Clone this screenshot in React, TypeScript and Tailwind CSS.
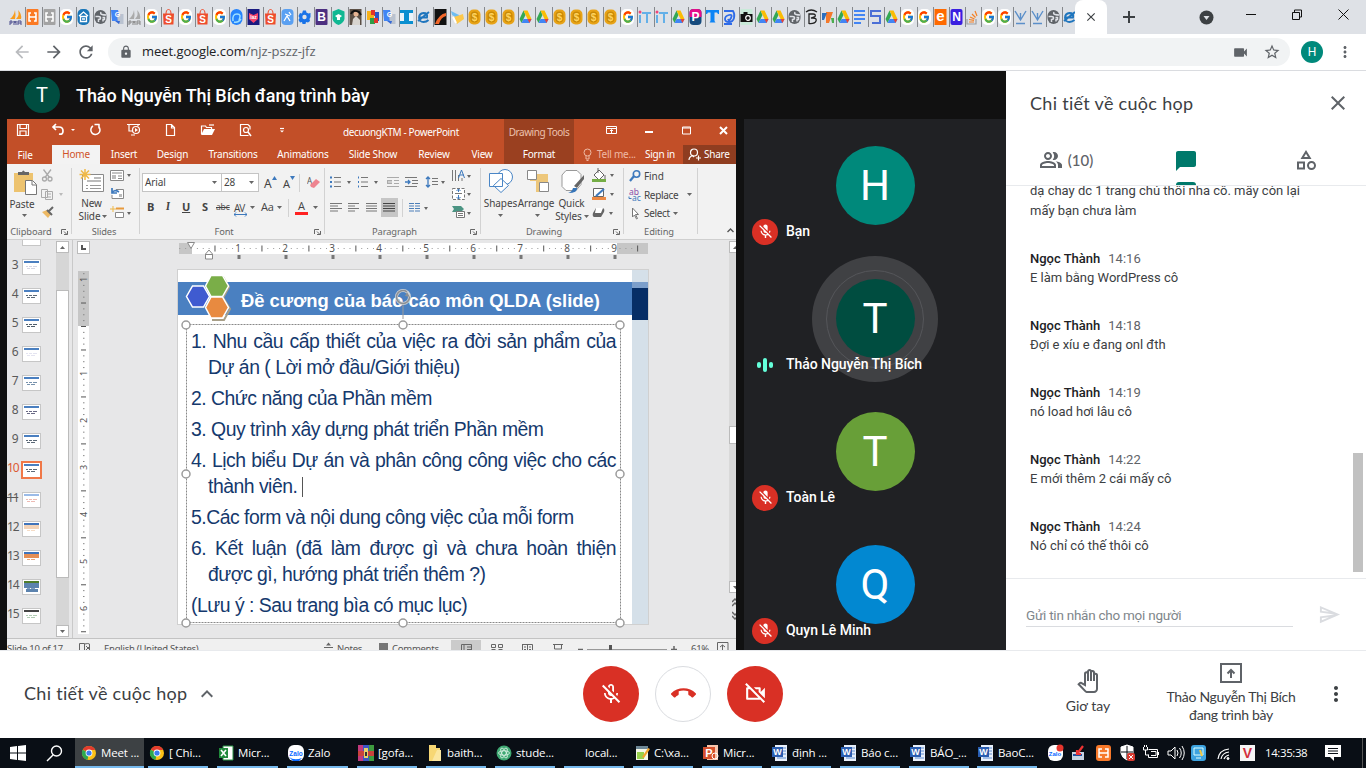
import React from 'react';
import {
  MdMicOff, MdOutlineMicOff, MdCallEnd, MdOutlineVideocamOff, MdOutlinePeopleAlt, MdChatBubble,
  MdOutlineCategory, MdClose, MdKeyboardArrowUp, MdMoreVert, MdArrowBack, MdArrowForward, MdRefresh,
  MdLock, MdVideocam, MdStarBorder, MdOutlineSend, MdOutlinePanTool,
} from 'react-icons/md';
import { FcGoogle } from 'react-icons/fc';

/* ---------- browser tabs ---------- */

const tabs: string[] = [
  'pma', 'xampp', 'xamppg', 'g', 'house', 'globe', 'tr', 'pmag', 'g', 'shopee', 'g', 'shopee', 'g', 'aqua', 'laz',
  'shopee', 'people', 'gear', 'boot', 'shield', 'photo', 'colors', 'tr', 'ibeam', 'e', 'swoosh', 'pencil', 'coin',
  'coin', 'coin', 'drive', 'drive', 'coin', 'coin', 'coin', 'coin', 'g', 'it', 'it', 'drive', 'p', 't', 'spiral',
];
const narrowTabs: string[] = [
  'camera', 'drive', 'drive', 'globe', 'beta', 'seven', 'drive', 'docs', 'lines', 'drive', 'g', 'g', 'ebay', 'n',
  'stack', 'g', 'g', 'v', 'v', 'globe',
];

const Letter = ({ c, fill = '#fff', size = 12, y = 12.3 }: { c: string; fill?: string; size?: number; y?: number }) => (
  <text x="6.5" y={y} fontSize={size} fontWeight="700" fontFamily="Liberation Sans, sans-serif" textAnchor="middle" fill={fill}>{c}</text>
);

const Xampp = ({ c }: { c: string }) => (
  <><rect x=".5" width="12" height="16" rx="1" fill={c} /><path d="M5 4H3v2.500q0 1.500 1.500 1.500H3v4h2M8 4h2v2.500Q10 8 8.500 8H10v4H8M4.500 8h4" stroke="#fff" strokeWidth="1.600" fill="none" /></>
);

function Fav({ k }: { k: string }) {
  if (k === 'g')
    return (
      <span className="flex h-[16px] w-[13px] items-center justify-center rounded-[5px] bg-white">
        <FcGoogle size={14} preserveAspectRatio="none" className="w-[12px]" />
      </span>
    );
  const body: Record<string, React.ReactNode> = {
    pma: <><path d="M1 10Q5 7 6 1Q7 6 6 10ZM7 10Q11 6 9 1Q13 5 12 10Z" fill="#f89c1c" /><path d="M1 12v4m0-4h2v2H1m4 2v-4l1 2 1-2v4m2 0v-4h3v4m-3-2h3" stroke="#4c4f8f" fill="none" /></>,
    pmag: <><path d="M1 10Q5 7 6 1Q7 6 6 10ZM7 10Q11 6 9 1Q13 5 12 10Z" fill="#aaa" /><path d="M1 12v4m0-4h2v2H1m4 2v-4l1 2 1-2v4m2 0v-4h3v4m-3-2h3" stroke="#888" fill="none" /></>,
    xampp: <Xampp c="#fb7a24" />,
    xamppg: <Xampp c="#a3a3a3" />,
    house: <><rect x=".5" width="12" height="16" rx="5" fill="#1976b8" /><path d="M2 7l4.500-4L11 7M3.500 7.500h6v5h-6zM5 10h3" stroke="#fff" strokeWidth="1.300" fill="none" /></>,
    globe: <><rect x=".5" y="1" width="12" height="14" rx="6" fill="#5f6368" /><path d="M7 3q-1 2 1 2.500T12 6M1.500 7.500h3q2 0 2 1.500t-2 1.500V13M8.500 8.500h2v2H9v2" stroke="#dee1e6" strokeWidth="1.500" fill="none" /></>,
    tr: <><path d="M0 1h7l3 11H1z" fill="#4285f4" /><path d="M6 5h6.500v10H7z" fill="#b9c2d0" /><path d="M4 12h5l-1 3z" fill="#3367d6" /><Letter c="G" size={7} y={8} /></>,
    shopee: <><path d="M1 4.500h11l-.6 11H1.600z" fill="#ee4d2d" /><path d="M4 5q0-4.500 2.500-4.500T9 5" stroke="#ee4d2d" fill="none" /><Letter c="S" size={10} y={13.5} /></>,
    aqua: <><rect x=".5" width="12" height="16" rx="6" fill="#2684fc" /><path d="M3 12q-1-7 4-7t2 6M4 13q4 1 7-3" stroke="#9fe0ff" strokeWidth="1.500" fill="none" /></>,
    laz: <><rect x=".5" width="12" height="16" fill="#1a1a80" /><path d="M2 4l4.500 2L11 4v6l-4.500 4L2 10z" fill="#f5426c" /><Letter c="laz" size={5} y={9.5} /></>,
    people: <><rect x=".5" width="12" height="16" rx="4" fill="#5aa0f2" /><path d="M3 12l3-5 3 5M4 5l5 2M8 3l2 3" stroke="#fff" strokeWidth="1.300" fill="none" /></>,
    gear: <><path d="M5 1.500h3l.4 2 2 1L12.500 4v4l-1 2 .5 2-2 1.500-2-.500-.500 2h-3l-.500-2-2 .500L.5 11l1-2-1-2L2 4l2 .5z" fill="#1a73e8" /><circle cx="6.500" cy="8" r="2.200" fill="#dee1e6" /></>,
    boot: <><rect x=".5" width="12" height="16" rx="1" fill="#4c2f80" /><Letter c="B" /></>,
    shield: <><path d="M6.500 0l6 2.500V10q-1 4-6 6-5-2-6-6V2.500z" fill="#10b893" /><path d="M3 7l3.500-2L10 7l-2 1.500v2.500H5V8.500z" fill="#fff" /></>,
    photo: <><rect x=".5" width="12" height="16" fill="#5b4f45" /><path d="M3 16l1-6 3-3 4 4v5z" fill="#d8d4cf" /><circle cx="7" cy="5" r="2.500" fill="#e5b392" /><path d="M2 5q2-5 8-2l2 3" stroke="#111" strokeWidth="2" fill="none" /></>,
    colors: <><path d="M1 2h4v9H1z" fill="#f6b11a" /><path d="M5 1h4v6H5z" fill="#e2332b" /><path d="M9 3h4v9H9z" fill="#2a55c7" /><path d="M4 9h5v6H4z" fill="#2f9c47" /><path d="M8 9h4v5H8z" fill="#e2332b" /><path d="M4 6h4v3H4z" fill="#f6b11a" /></>,
    ibeam: <><path d="M0 1h13v14H0z" fill="#0a8fd0" /><path d="M0 4h4v8H0zM9 4h4v8H9z" fill="#eaf4fa" /></>,
    e: <path d="M3 8.500h7q1-4.500-3.500-4.500-4.500.5-4.500 5 .5 4 4.500 4 3 0 5-2M1 12L12 3" stroke="#1f75bd" strokeWidth="1.900" fill="none" />,
    swoosh: <><rect x=".5" width="12" height="16" fill="#111" /><path d="M1 15Q5 5 12 4v3Q7 8 5 15z" fill="#f2672a" /></>,
    pencil: <><path d="M0 2l8 4 1 5-8-5z" fill="#6fbdf0" /><path d="M3 8l9-3 1 5-7 5z" fill="#fdc84b" /><path d="M2 8l3 6" stroke="#fff" strokeWidth="2" /></>,
    coin: <><rect x=".5" y=".5" width="12" height="15" rx="5" fill="#e8a317" /><rect x="2.500" y="2.500" width="8" height="11" rx="4" fill="#c98a06" /><Letter c="$" fill="#ffd25e" size={10} y={11.5} /></>,
    drive: <><path d="M4.500 1.500L.5 10l2 4L6.500 6z" fill="#34a853" /><path d="M4.500 1.500h4l4 8.500h-4z" fill="#fbbc04" /><path d="M4.500 10h8l-2 4h-8z" fill="#4285f4" /><path d="M8.500 10h4l-2 4z" fill="#ea4335" /></>,
    it: <><circle cx="2" cy="3" r="1.500" fill="#f0467a" /><path d="M2 6v8M4 4h9M9 4v10" stroke="#64b0e8" strokeWidth="2" fill="none" /></>,
    p: <><rect x=".5" width="12" height="16" rx="4" fill="#154a7d" /><path d="M.5 8V4q0-4 4-4h4q4 0 4 4v4z" fill="#e50d8a" /><Letter c="P" /></>,
    t: <path d="M0 1h13v4h-1l-1-1.500H8.500V12l1 1.500h-6l1-1.500V3.500H2L1 5H0z" fill="#0d84f5" />,
    spiral: <path d="M1 2h9q2 3 1 7t-5 4-4-3 4-4 2 3-3 1M1 15h8" stroke="#2f6be8" strokeWidth="1.800" fill="none" />,
    camera: <><rect x=".5" width="12" height="16" fill="#c9ead9" /><path d="M.5 5h3V3h4v2h5v8H.5z" fill="#111" /><circle cx="8" cy="9" r="2.300" fill="none" stroke="#fff" strokeWidth="1.200" /></>,
    beta: <><path d="M4 15V5h4q3 0 2 2.500L6 9h2q4 0 3 3t-7 2.500M1 3q5-4 11 0" stroke="#222" strokeWidth="1.300" fill="none" /></>,
    seven: <><path d="M5 3h7L8 14H5z" fill="#f47a2c" /><path d="M1 4h5L3 11H1z" fill="#2c6fbe" /><path d="M10 9h3v5h-2z" fill="#4caf50" /></>,
    docs: <path d="M1 1h11v2H1zM1 5h11v2H1zM1 9h11v2H1zM1 13h7v2H1z" fill="#4285f4" />,
    lines: <path d="M12 2H2v5h9v7H3" stroke="#4b6fd6" strokeWidth="2" fill="none" />,
    ebay: <><rect x=".5" width="12" height="16" fill="#ff6a00" /><Letter c="e" size={15} /></>,
    n: <><rect x=".5" width="12" height="16" rx="2" fill="#3a1fe0" /><Letter c="N" /></>,
    stack: <><path d="M1 10v5h9v-5" stroke="#9c9fa3" strokeWidth="1.200" fill="none" /><path d="M3 13h5M3 10.500l5 .8M4 8l4.500 2M6 5l3.500 3.500M9 2l2 5" stroke="#f48024" strokeWidth="1.200" /></>,
    v: <path d="M1 2l5.500 9L12 2M6.500 4v6M2 14.500h9" stroke="#5b8fc9" strokeWidth="1.400" fill="none" />,
  };
  return <svg width="13" height="16" viewBox="0 0 13 16" className="shrink-0">{body[k]}</svg>;
}

function Browser() {
  return (
    <>
      <div className="flex h-[34px] bg-[#dee1e6] pl-[9px]">
        {tabs.map((k, i) => (
          <div key={i} className="flex h-[34px] w-[17px] shrink-0 items-center justify-between">
            <Fav k={k} /><span className="h-[20px] w-px bg-[#85888c]" />
          </div>
        ))}
        {narrowTabs.map((k, i) => (
          <div key={i} className="flex h-[34px] w-[16.150px] shrink-0 items-center justify-between">
            <Fav k={k} /><span className="h-[20px] w-px bg-[#85888c]" />
          </div>
        ))}
        <div className="flex w-[12px] shrink-0 items-center overflow-hidden"><Fav k="e" /></div>
        <div className="flex w-[32px] shrink-0 items-center justify-center rounded-t-lg bg-white text-[#3c4043]"><MdClose size={14} /></div>
        <div className="flex w-[44px] shrink-0 items-center justify-center">
          <svg width="12" height="12" stroke="#3c4043" strokeWidth="2"><path d="M6 0v12M0 6h12" /></svg>
        </div>
        <div className="ml-[48px] flex w-[16px] shrink-0 items-center">
          <svg width="15" height="15"><circle cx="7.500" cy="7.500" r="7" fill="#3c4043" /><path d="M4.500 6h6l-3 4z" fill="#dee1e6" /></svg>
        </div>
        <svg className="ml-[31px] mt-[8px] shrink-0" width="104" height="13" fill="none" stroke="#111" strokeWidth="1">
          <path d="M0 6.500h10M46.500 4.500h7v7h-7zM48.500 4v-2h7v7h-2M92.500 1.500l10 10M102.500 1.500l-10 10" />
        </svg>
      </div>
      <div className="flex h-[37px] items-center border-b border-[#dadce0] bg-white">
        <div className="flex w-[108px] items-center gap-[12px] pl-[12px] text-[#5f6368]">
          <MdArrowBack size={20} className="text-[#b9bbbe]" /><MdArrowForward size={20} /><MdRefresh size={20} />
        </div>
        <div className="flex h-[28px] w-[1182px] items-center rounded-full bg-[#f1f3f4] pl-[11px] text-[#5f6368]">
          <MdLock size={14} />
          <span className="ml-[9px] font-['Open_Sans',sans-serif] text-[13px] tracking-[-0.06px]"><span className="text-[#202124]">meet.google.com</span>/njz-pszz-jfz</span>
          <MdVideocam size={17} className="ml-auto" /><MdStarBorder size={18} className="ml-[14px] mr-[9px]" />
        </div>
        <div className="ml-[11px] flex size-[22px] items-center justify-center rounded-full bg-[#00897b] font-['Roboto',sans-serif] text-[12px] text-white">H</div>
        <MdMoreVert size={18} className="ml-[13px] text-[#5f6368]" />
      </div>
    </>
  );
}

/* ---------- presented window ---------- */

const Caret = ({ c = '#666' }: { c?: string }) => <svg width="5" height="3" className="shrink-0"><path d="M0 0h5L2.500 3z" fill={c} /></svg>;
const Launcher = () => <svg width="7" height="6" fill="none" stroke="#666" strokeWidth="1"><path d="M.5 5V.5H5M3 2.500l3 3M6.500 2v3.500H3" /></svg>;

function TitleBar() {
  return (
    <div className="flex h-[45px] bg-[#c24f28] text-white">
      <div className="w-[497px]">
        <div className="flex h-[26px] items-start">
          <svg width="290" height="22" viewBox="7 119 290 22" fill="none" stroke="#fff" strokeWidth="1.200">
            <path d="M17.500 124.500h11v11h-11zM20 124.500v4h6.500v-4M20 135v-4h6v4" />
            <path d="M56 124l-3 3 3 3M53 127h6q4 0 4 4t-4 3" strokeWidth="1.700" /><path d="M71 129h4l-2 2z" fill="#fff" stroke="none" />
            <path d="M98.500 126.500a4.600 4.600 0 1 1-5.500-.5M94.500 124.500h5M99 124v4.500" strokeWidth="1.500" />
            <path d="M127 124.500h13M129 125v6h4M138 126v-1M131 135h4" /><circle cx="136" cy="130" r="3.500" /><path d="M135 128l3 2-3 2z" fill="#fff" stroke="none" />
            <path d="M166.500 124.500h5l3 3v8h-8zM171.500 125v3h3" />
            <path d="M201.500 134v-8h4l1 1.500h5v2" /><path d="M201 135l3-6h11l-3 6z" fill="#fff" stroke="none" /><path d="M209 125h5" />
            <path d="M248 124.500h-7.500v11h8M248 124.500l2 2v3" /><circle cx="246" cy="130" r="2.500" /><path d="M248 132l3 4" strokeWidth="1.600" />
            <path d="M280 128.500h4" /><path d="M280 130.500h4l-2 2z" fill="#fff" stroke="none" />
          </svg>
          <span className="ml-[46px] mt-[7px] whitespace-nowrap text-[10px] leading-[13px] tracking-[-0.370px]">decuongKTM - PowerPoint</span>
        </div>
        <div className="flex h-[19px] items-center whitespace-nowrap text-center text-[10px] tracking-[-0.2px]">
          <span className="w-[36px] pt-[1px]">File</span><span className="ml-[9px] h-[19px] w-[48px] bg-[#f3f3f3] leading-[19px] text-[#d0532a]">Home</span>
          <span className="ml-[6px] w-[36px]">Insert</span><span className="ml-[9px] w-[43px]">Design</span>
          <span className="ml-[12px] w-[54px]">Transitions</span><span className="ml-[13px] w-[60px]">Animations</span>
          <span className="ml-[12px] w-[56px]">Slide Show</span><span className="ml-[11px] w-[44px]">Review</span><span className="ml-[12px] w-[28px]">View</span>
        </div>
      </div>
      <div className="flex w-[70px] flex-col items-center bg-[#9a4020] text-[10px]">
        <span className="h-[29px] whitespace-nowrap pt-[6px] leading-[14px] tracking-[-0.450px] text-[#edc0ae]">Drawing Tools</span>
        <span className="leading-[13px] tracking-[-0.250px]">Format</span>
      </div>
      <div className="w-[162px]">
        <svg width="162" height="26" viewBox="574 119 162 26" fill="none" stroke="#fff">
          <path d="M606.500 126.500h10v7h-10zM606 128.500h11M611.500 133v-3M610 131l1.500-1.500L613 131" /><path d="M645 132h8" strokeWidth="2" /><path d="M682.500 127h8v7h-8zM682 128h9" /><path d="M720 127l7 7M727 127l-7 7" strokeWidth="2" />
        </svg>
        <div className="flex h-[19px] items-center whitespace-nowrap text-[10px] tracking-[-0.250px]">
          <svg className="ml-[9px]" width="9" height="13" fill="none" stroke="#eeb9a4"><circle cx="4.500" cy="4.500" r="3.500" /><path d="M3 8v3h3V8M3.500 12.500h2" /></svg>
          <span className="ml-[5px] w-[48px] text-[#efb9a5]">Tell me...</span><span className="w-[38px]">Sign in</span>
          <span className="flex h-[19px] flex-1 items-center bg-[#8f3d20] pl-[5px]">
            <svg width="13" height="13" fill="none" stroke="#fff" strokeWidth="1.200"><circle cx="6" cy="4.500" r="3.500" /><path d="M1 12q0-3 3.500-4.500L6 9M8 10h5M10.500 7.500v5" /></svg>
            <span className="ml-[3px]">Share</span>
          </span>
        </div>
      </div>
    </div>
  );
}

const Group = ({ w, label, launcher = true, children }: { w: string; label: string; launcher?: boolean; children: React.ReactNode }) => (
  <div className={w + ' flex shrink-0 flex-col'}>
    <div className="flex h-[61px]">{children}<span className="ml-auto mt-[4px] h-[66px] w-px shrink-0 bg-[#d2d2d2]" /></div>
    <div className="flex h-[13px] items-center pr-[4px]">
      <span className={(launcher ? 'pr-[6px] ' : '') + 'flex-1 text-center text-[9.300px] leading-[12px] tracking-[-0.1px] text-[#666]'}>{label}</span>{launcher && <Launcher />}
    </div>
  </div>
);

const lines = (x: number, y: number, ws: number[], step = 2.5) => ws.map((w, i) => `M${x} ${y + i * step}h${w}`).join('');

function Ribbon() {
  return (
    <div className="flex h-[76px] border-b border-[#cfcfcf] bg-[#f2f2f2] text-[10px] tracking-[-0.1px] text-[#444]">
      <Group w="w-[65px]" label="Clipboard">
        <div className="flex w-[34px] flex-col items-center pt-[6px]">
          <svg className="ml-[2px]" width="24" height="26"><path d="M1 3h19v19H1z" fill="#edc36f" /><path d="M5 5V2h4q1-3 3 0h4v3z" fill="#666" /><path d="M12.500 10.500h7l4 4v10h-11z" fill="#fff" stroke="#777" /><path d="M19 11v4h4" fill="none" stroke="#777" /></svg>
          <span className="-ml-[4px] leading-[16px]">Paste</span><span className="mt-[2px]"><Caret /></span>
        </div>
        <svg className="mt-[4px]" width="25" height="54" viewBox="41 168 25 54" fill="none" stroke="#aaa" strokeWidth="1.300">
          <path d="M43.500 169.500l6 8M51 169.500l-6 8" /><circle cx="44.500" cy="179" r="2" /><circle cx="50" cy="179" r="2" />
          <path d="M41.500 189.500h6v8h-6zM45.500 191.500h7v8h-7z" fill="#f2f2f2" strokeWidth="1" /><path d="M47 194h4M47 197h4" strokeWidth="1" /><path d="M59 193h4l-2 3z" fill="#bbb" stroke="none" />
          <path d="M42 212l5-2 4 4-3 4z" fill="#edb964" stroke="none" /><path d="M47 210l5 5M49 211l4-4" stroke="#666" strokeWidth="2" />
        </svg>
      </Group>
      <Group w="w-[68px]" label="Slides" launcher={false}>
        <div className="flex w-[38px] flex-col items-center pt-[5px]">
          <svg className="ml-[2px]" width="26" height="26" fill="none"><path d="M3.500 5.500h21v17h-21z" fill="#fff" stroke="#8a8a8a" /><path d="M15 9h7M8 12h14" stroke="#bbb" strokeWidth="2" /><path d="M7 16.500h2M11 16.500h11M7 19.500h2M11 19.500h11" stroke="#999" /><path d="M6 0v11M.5 5.500h11M2 1.500l8 8M10 1.500l-8 8" stroke="#efb948" strokeWidth="1.500" /></svg>
          <span className="ml-[1px] mt-[2px] leading-[13px]">New</span><span className="ml-[4px] flex items-center gap-[2px] leading-[13px]">Slide<Caret /></span>
        </div>
        <svg className="mt-[4px]" width="22" height="54" viewBox="110 168 22 54" fill="none" stroke="#888">
          <path d="M110.500 170.500h13v10h-13z" fill="#fff" /><path d="M112 173h10M118 176h4M118 178.500h4" /><path d="M112 175h4v4h-4z" fill="#bbb" stroke="none" />
          <path d="M116 189.500h7.500v9H112V195" fill="#fff" /><path d="M112 193q2-4 7-1M112 188v5h5" stroke="#3d79bd" strokeWidth="1.700" /><path d="M119 194h3v3h-3z" fill="#bbb" stroke="none" />
          <path d="M116 208.500h8" stroke="#e89a3c" strokeWidth="2" /><path d="M115.500 212.500h8v5h-8z" fill="#fff" /><path d="M113 206v6M110 209h6" stroke="#efb948" />
          <path d="M127 174h4l-2 3zM127 212h4l-2 3z" fill="#666" stroke="none" />
        </svg>
      </Group>
      <Group w="w-[185px]" label="Font">
        <div className="pl-[2px]">
          <div className="flex h-[28px] items-end">
            <span className="flex h-[19px] w-[80px] items-center justify-between border border-[#c4c4c4] bg-white px-[2px] pr-[4px]">Arial<Caret /></span>
            <span className="-ml-px flex h-[19px] w-[38px] items-center justify-between border border-[#c4c4c4] bg-white px-[2px] pr-[4px]">28<Caret /></span>
            <span className="ml-[5px] flex w-[19px] text-[12px] leading-[17px]">A<svg width="5" height="4" className="mt-[1px]"><path d="M0 4h5L2.500 0z" fill="#3d79bd" /></svg></span>
            <span className="flex w-[16px] text-[11px] leading-[17px]">A<svg width="5" height="4" className="mt-[1px]"><path d="M0 0h5L2.500 4z" fill="#3d79bd" /></svg></span>
            <span className="h-[18px] w-px bg-[#d2d2d2]" />
            <svg className="mb-[3px] ml-[7px]" width="13" height="13"><text x="0" y="8" fontSize="8" fill="#555" fontFamily="Noto Sans">A</text><path d="M3 9l6-6 4 3-6 6-3-1z" fill="#ee8490" /></svg>
          </div>
          <div className="flex h-[28px] items-center pt-[3px] font-['Open_Sans',sans-serif] text-[11px]">
            <b className="w-[18px] pl-[5px]">B</b><i className="w-[18px] pl-[6px] font-serif font-bold">I</i><b className="w-[18px] pl-[4px] underline">U</b><b className="w-[14px] pl-[6px]">S</b>
            <span className="ml-[6px] w-[18px] text-[8.500px] line-through">abc</span>
            <span className="relative w-[16px] text-[10px] leading-[12px] tracking-[-1px]">AV<svg className="absolute -bottom-[3px] left-0" width="13" height="5" fill="none" stroke="#3d79bd"><path d="M0 2.500h13M2 .5l-2 2 2 2M11 .5l2 2-2 2" /></svg></span><Caret />
            <span className="ml-[6px] w-[16px]">Aa</span><Caret /><span className="ml-[6px] h-[18px] w-px bg-[#d2d2d2]" />
            <span className="ml-[6px] mr-[5px] w-[13px] border-b-[3px] border-[#f22] text-center leading-[12px]">A</span><Caret />
          </div>
        </div>
      </Group>
      <Group w="w-[156px]" label="Paragraph">
        <svg className="mt-[1px]" width="152" height="60" viewBox="325 165 152 60" fill="none" stroke="#777" strokeWidth="1">
          <path d={lines(334, 177.5, [7, 7, 7], 4.500) + lines(361, 177.500, [7, 7, 7], 4.500)} />
          <path d={lines(330, 177.5, [2, 2, 2], 4.500) + lines(358, 177.500, [1, 1, 1], 4.500)} stroke="#3d79bd" strokeWidth="2" />
          <path d="M347 181h4l-2 3zM374 181h4l-2 3z" fill="#666" stroke="none" />
          <path d={lines(387, 177.5, [12, 5, 5, 12], 3) + 'M394 180.500h5M394 183.500h5'} stroke="#aaa" /><path d="M392 182h-5M389 180l-2 2 2 2" stroke="#aaa" />
          <path d={lines(405, 177.5, [12], 3) + 'M412 180.500h6M412 183.500h6M405 186.500h12'} /><path d="M405 182h5M408 180l2 2-2 2" stroke="#3d79bd" strokeWidth="1.300" />
          <path d="M428 177v10M426 179l2-2 2 2M426 185l2 2 2-2" stroke="#3d79bd" strokeWidth="1.300" /><path d={lines(432, 178.500, [6, 6, 6], 3)} /><path d="M441 181h4l-2 3zM467 175h4l-2 3zM467 193h4l-2 3zM467 212h4l-2 3z" fill="#666" stroke="none" />
          <path d="M452.500 170v11M455.500 170v11M458.500 175v6M462 178v3" /><path d="M458.500 178l3-8 3 8M460 175h4" stroke="#3d79bd" />
          <path d="M452.500 188.500h12v11h-12z" fill="#fff" strokeDasharray="3 1.500" /><path d="M458.500 189v3M458.500 195v4M456.500 191l2-2 2 2M456.500 197l2 2 2-2" stroke="#3d79bd" /><path d="M455 193.500h7" />
          <path d="M452 206h9l3 3-3 3h-9l2-3z" fill="#4b9483" stroke="none" /><path d="M456.500 211.500h8v6h-8z" fill="#fff" /><path d="M458 213.500h5M458 215.500h5" />
          <path d={lines(330, 203.5, [12, 8, 12, 8]) + lines(348, 203.5, [11, 7, 11, 7]) + lines(366, 203.5, [11, 11, 11, 11])} />
          <path d="M381 198h17v19h-17z" fill="#c6c6c6" stroke="none" /><path d={lines(383, 203.500, [12, 12, 12, 12])} stroke="#444" />
          <path d="M402.500 199v18" stroke="#d2d2d2" /><path d={lines(409, 203.5, [5, 5, 5, 5]) + lines(415, 203.5, [5, 5, 5, 5])} stroke="#4c7fb9" /><path d="M424 207h4l-2 3z" fill="#666" stroke="none" />
        </svg>
      </Group>
      <Group w="w-[143px]" label="Drawing">
        <div className="flex w-[39px] flex-col items-center pt-[5px]">
          <svg width="26" height="26" fill="#fff" stroke="#4a86c6"><circle cx="17" cy="8" r="7.500" /><path d="M1.500 4.500h13v13h-13zM13 9.500l7.500 7-7.500 7-7.500-7z" /></svg>
          <span className="mt-[2px] leading-[13px]">Shapes</span><span className="mt-[4px]"><Caret /></span>
        </div>
        <div className="flex w-[35px] flex-col items-center pt-[5px]">
          <svg width="26" height="26" stroke="#888"><path d="M5 5h18v18H5z" fill="#edc77b" stroke="none" /><path d="M2 12h9v12H2zM14 0h11v4H14z" fill="#f2f2f2" stroke="none" /><path d="M2.500 1.500h9v9h-9zM14.500 13.500h9v9h-9z" fill="#fff" /></svg>
          <span className="-ml-[3px] mt-[2px] leading-[13px] tracking-[-0.250px]">Arrange</span><span className="mt-[4px]"><Caret /></span>
        </div>
        <div className="flex w-[36px] flex-col items-center pt-[5px]">
          <svg width="26" height="26"><path d="M6 1.500h11l4 4v10l-5 6H6l-4-4V6z" fill="#fff" stroke="#999" /><path d="M24 6v4l-7 9-3-2z" fill="#666" /><path d="M8 24q4-1 5-5h4q1 5-9 5z" fill="#3775b8" /></svg>
          <span className="-ml-[3px] mt-[2px] leading-[13px]">Quick</span><span className="-ml-[2px] flex items-center gap-[2px] leading-[13px]">Styles<Caret /></span>
        </div>
        <svg className="mt-[4px]" width="25" height="54" viewBox="591 168 25 54" fill="none" stroke="#666">
          <path d="M594 175l5-5 5 5-5 5z" fill="#fff" /><path d="M598 168v5M605 175v4" /><path d="M592 179h14v3h-14z" fill="#74ad45" stroke="none" />
          <path d="M593.500 188.500h10v8h-10z" fill="#fff" /><path d="M596 196l8-7" stroke="#3d79bd" strokeWidth="2" /><path d="M592 197h14v3h-14z" fill="#ed8a44" stroke="none" />
          <path d="M593 213l3-5h7q2 1 1 4l-3 5h-7q-2-1-1-4z" fill="#666" stroke="none" /><path d="M596 208h7l-2 5h-6z" fill="#fff" stroke="none" />
          <path d="M610 174h4l-2 3zM610 193h4l-2 3zM609 212h4l-2 3z" fill="#666" stroke="none" />
        </svg>
      </Group>
      <Group w="w-[74px]" label="Editing" launcher={false}>
        <div className="flex w-[72px] flex-col pl-[4px] pt-[3px] leading-[18.500px]">
          <div className="flex items-center"><svg width="14" height="12" fill="none" stroke="#3d79bd" strokeWidth="1.600"><circle cx="8.500" cy="4" r="3.200" /><path d="M6 6l-4 5" strokeWidth="2.200" /></svg><span className="ml-[2px]">Find</span></div>
          <div className="flex items-center"><svg width="14" height="14" fontFamily="Noto Sans" fontSize="8.500"><text x="1" y="6.500" fill="#8a4fa8">ab</text><text x="4" y="13" fill="#3d79bd">ac</text><path d="M1 8.500v2h2.500" stroke="#3d79bd" fill="none" /></svg><span className="ml-[2px] w-[43px] tracking-[-0.350px]">Replace</span><Caret /></div>
          <div className="flex items-center"><svg width="14" height="13" fill="#fff" stroke="#777"><path d="M4.500 1v9l2-2 2 4 1-.5-2-4h3z" /></svg><span className="ml-[2px] mr-[3px] tracking-[-0.350px]">Select</span><Caret /></div>
        </div>
      </Group>
      <div className="flex flex-1 items-end justify-end pb-[6px] pr-[2px]"><svg width="7" height="5" fill="none" stroke="#555" strokeWidth="1.400"><path d="M.5 4l3-3 3 3" /></svg></div>
    </div>
  );
}

const thumbs = [
  { n: '3', a: '#4a7fc0', b: '#ccd' }, { n: '4', a: '#4a7fc0', b: '#345' }, { n: '5', a: '#4a7fc0', b: '#234' }, { n: '6', a: '#4a7fc0', b: '#dde' },
  { n: '7', a: '#4a7fc0', b: '#579' }, { n: '8', a: '#4a7fc0', b: '#446' }, { n: '9', a: '#4a7fc0', b: '#345' }, { n: '10', a: '#4a7fc0', b: '#345' },
  { n: '11', a: '#9bbbe8', b: '#e8a9a0' }, { n: '12', a: '#3f74bb', b: '#f2d3b8' }, { n: '13', a: '#3f74bb', b: '#e58f55' }, { n: '14', a: '#4f7d2c', b: '#5c83ae' }, { n: '15', a: '#444', b: '#9cc0a0' },
];

const slideLines = [
  { t: '1. Nhu cầu cấp thiết của việc ra đời sản phẩm của', c: '[text-align-last:justify]' },
  { t: 'Dự án ( Lời mở đầu/Giới thiệu)', c: 'ml-[17px] mb-[5px]' },
  { t: '2. Chức năng của Phần mềm', c: 'mb-[5px]' },
  { t: '3. Quy trình xây dựng phát triển Phần mềm', c: 'mb-[5px]' },
  { t: '4. Lịch biểu Dự án và phân công công việc cho các', c: '[text-align-last:justify]' },
  { t: 'thành viên.', c: 'ml-[17px] mb-[5px]', cur: true },
  { t: '5.Các form và nội dung công việc của mỗi form', c: 'mb-[5px]' },
  { t: '6. Kết luận (đã làm được gì và chưa hoàn thiện', c: '[text-align-last:justify]' },
  { t: 'được gì, hướng phát triển thêm ?)', c: 'ml-[17px] mb-[5px]' },
  { t: '(Lưu ý : Sau trang bìa có mục lục)', c: '' },
];

const handles = [[8, 55], [225, 55], [442, 55], [8, 204], [442, 204], [8, 353], [225, 353], [442, 353]];

function Slide() {
  return (
    <div className="relative flex h-[354px] w-[470px] bg-white outline outline-1 outline-[#d0d0d0]">
      <div className="w-[454px]">
        <div className="mt-[12px] flex h-[33px] items-center bg-[#4a80c1]">
          <svg className="-mt-[2px] ml-[6px]" width="48" height="48" viewBox="184 274 48 48" stroke="#fff" strokeWidth="1.500">
            <path d="M211 277h12l6 10-6 11h-11M212 299h12l6 10-6 11h-12" fill="none" stroke="#a89f88" strokeWidth="2" />
            <path d="M192.500 286h11l6 10.500-6 10.500h-11l-6-10.500z" fill="#3f5bd0" /><path d="M211 275.500h11.500l6 10.500-6 10.500H211l-5.500-10.500z" fill="#7aae48" /><path d="M211 297h11.500l6 10.500-6 10.500H211l-5.500-10.500z" fill="#e88a40" />
          </svg>
          <span className="ml-[9px] mt-[5px] whitespace-nowrap font-['Liberation_Sans',sans-serif] text-[18.400px] font-bold text-white">Đề cương của báo cáo môn QLDA (slide)</span>
        </div>
        <div className="ml-[13px] mt-[12.500px] w-[425px] font-['Liberation_Sans',sans-serif] text-[19.400px] leading-[26px] tracking-[-0.500px] text-[#15396d]">
          {slideLines.map((l) => (
            <div key={l.t} className={'flex h-[26px] items-center whitespace-nowrap ' + l.c}>
              <span className="w-full">{l.t}{l.cur && <span className="ml-[5px] inline-block h-[20px] w-px bg-[#555] align-middle" />}</span>
            </div>
          ))}
        </div>
      </div>
      <div className="w-[16px] bg-[#d5e0e9]"><div className="mt-[12px] h-[6px] bg-[#7c9fcb]" /><div className="h-[32px] bg-[#062e66]" /></div>
      <svg className="absolute left-0 top-0 overflow-visible" width="470" height="354" fill="none">
        <rect x="8.500" y="54.500" width="434" height="298" stroke="#888" strokeDasharray="2 1" />
        <path d="M225 33v16" stroke="#9a9a9a" />
        {handles.map(([x, y]) => <circle key={x + '-' + y} cx={x} cy={y} r="4" fill="#fff" stroke="#9b9b9b" strokeWidth="1.500" />)}
        <circle cx="225" cy="27" r="6.500" stroke="#cfd3d8" strokeWidth="3" /><circle cx="225" cy="27" r="6.500" stroke="#8b8f94" strokeWidth="1.500" strokeDasharray="34 7" />
        <path d="M229 22l3 5-5-1z" fill="#8b8f94" />
      </svg>
    </div>
  );
}

const dots = Array.from({ length: 79 }, (_, i) => i - 2);

function HRuler() {
  return (
    <svg width="480" height="22" viewBox="174 241 480 22" fontFamily="Noto Sans" fontSize="10" fill="#555" textAnchor="middle">
      <path d="M179 243h13v11h-13zM617 243h31v11h-31z" fill="#c6c6c6" /><path d="M192 243h425v11H192z" fill="#fff" />
      {dots.map((d) => d % 8 !== 0 && (d % 4 === 0
        ? <rect key={d} x={191 + d * 5.87} y="245.500" width="1" height="6" /> : <rect key={d} x={191 + d * 5.87} y="248" width="1" height="1" fill="#999" />))}
      {[1, 2, 3, 4, 5, 6, 7, 8, 9].map((n) => <g key={n}><text x={191 + n * 47} y="252">{n}</text><rect x={190.500 + n * 47} y="255" width="3" height="4" fill="#777" /></g>)}
      <path d="M187.500 242.500h7l-3.500 6zM205.500 259v-5l3.500-4 3.500 4v5zM205.500 254.500h7" fill="#fff" stroke="#888" />
    </svg>
  );
}

function VRuler() {
  return (
    <svg width="12" height="364" viewBox="78 271 12 364" fontFamily="Noto Sans" fontSize="9" fill="#555" textAnchor="middle">
      <path d="M78 271h11v55H78z" fill="#c6c6c6" /><path d="M78 326h11v308H78z" fill="#fff" />
      {Array.from({ length: 62 }, (_, i) => i - 9).filter((d) => d % 8 !== 0 || d === 0).filter((d) => d < 53).map((d) => (d % 4 === 0
        ? <rect key={d} x="81" y={326 + d * 5.87} width="5" height="1" /> : <rect key={d} x="83" y={326 + d * 5.87} width="1.500" height="1" fill="#888" />))}
      {[-1, 1, 2, 3, 4, 5, 6].map((n) => <text key={n} transform={`translate(87 ${326.500 + n * 47}) rotate(-90)`}>{Math.abs(n)}</text>)}
    </svg>
  );
}

function PowerPoint() {
  return (
    <div className="h-[531px] w-[729px] overflow-hidden bg-[#e7e7e8] font-['Noto_Sans',sans-serif]">
      <TitleBar />
      <Ribbon />
      <div className="flex h-[398px]">
        <div className="flex h-[398px] w-[49px] shrink-0 flex-col overflow-hidden">
          <div className="h-[21px]"><div className="ml-[15px] h-[6px] w-[19px] border border-t-0 border-[#c6c6c6] bg-white" /></div>
          {thumbs.map((t) => {
            const on = t.n === '10';
            return (
              <div key={t.n} className="flex h-[29.100px] shrink-0">
                <span className={(on ? 'text-[#dd5a34]' : 'text-[#5a5a5a]') + ' h-[12px] w-[11px] text-right text-[12px] leading-[10px] ' + (t.n.length > 1 ? 'tracking-[-1.200px]' : 'tracking-[-0.500px]') + (t.n === '11' ? ' line-through' : '')}>{t.n}</span>
                <span className={(on ? 'outline-[2.500px] outline-[#f07848]' : 'outline-[1px] outline-[#c6c6c6]') + ' ml-[5px] h-[14px] w-[17px] bg-white outline'}>
                  <svg width="17" height="14"><path d="M1 1h15v2H1z" fill={t.a} /><path d="M3 6h2v1H3zM6 6h3v1H6zM10 6h4v1h-4zM4 8h3v1H4zM8 8h4v1H8z" fill={t.b} opacity=".8" />{t.n > '11' && t.n < '15' && t.n.length > 1 && <path d="M1 3h15v4H1z" fill={t.b} />}{t.n === '14' && <path d="M1 5h15v3H1zM3 9h12v3H3z" fill="#5c83ae" />}</svg>
                </span>
              </div>
            );
          })}
        </div>
        <div className="mt-[1px] flex h-[396px] w-[13px] shrink-0 flex-col bg-[#d6d6d6]">
          <div className="flex h-[12px] items-center justify-center border border-[#bbb] bg-white"><svg width="5" height="3"><path d="M0 3h5L2.500 0z" fill="#666" /></svg></div>
          <div className="mt-[37px] h-[288px] border border-[#bbb] bg-white" />
          <div className="mt-auto flex h-[12px] items-center justify-center border border-[#bbb] bg-white"><Caret /></div>
        </div>
        <div className="ml-[3px] w-px shrink-0 bg-[#c9c9c9]" />
        <div className="flex w-[17px] shrink-0 flex-col items-start pl-[4px] pt-[1px]">
          <div className="flex h-[13px] w-[13px] shrink-0 items-center justify-center border border-[#bbb] bg-white"><svg width="5" height="5" fill="none" stroke="#555" strokeWidth="2"><path d="M1 0v4h4" /></svg></div>
          <div className="ml-[1px] mt-[17px]"><VRuler /></div>
        </div>
        <div className="w-[639px] shrink-0 pl-[84px] pt-[1px]"><HRuler /><div className="ml-[4px] mt-[7px]"><Slide /></div></div>
        <div className="mt-[1px] flex w-[14px] shrink-0 flex-col bg-[#d9d9d9]">
          <div className="flex h-[12px] items-center border border-[#bbb] bg-white pl-[3px]"><svg width="5" height="3"><path d="M0 3h5L2.500 0z" fill="#666" /></svg></div>
          <div className="mt-[173px] h-[18px] border border-[#bbb] bg-white" />
          <div className="mt-[137px] flex h-[12px] items-center border border-[#bbb] bg-white pl-[3px]"><Caret /></div>
          <div className="flex-1 bg-[#e7e7e8] pl-[3px] pt-[5px]"><svg width="5" height="22" fill="none" stroke="#666" strokeWidth="1.500"><path d="M0 4l3-3 3 3M0 8l3-3 3 3M0 14l3 3 3-3M0 18l3 3 3-3" /></svg></div>
        </div>
      </div>
      <div className="flex h-[12px] items-start border-t border-[#c3c3c3] bg-[#f0f0f0] pt-[3px] text-[9.500px] leading-[13px] tracking-[-0.250px] text-[#555]">
        <span className="w-[72px] whitespace-nowrap">Slide 10 of 17</span>
        <svg width="12" height="12" fill="none" stroke="#666"><path d="M.5 1.500h5v8h-5zM5.500 2q4-1 5 0v8M7 4l4 4M11 4l-4 4" /></svg>
        <span className="ml-[13px] w-[220px] whitespace-nowrap">English (United States)</span>
        <svg width="9" height="9" fill="none" stroke="#666"><path d="M0 5.500h9M0 8.500h9" /><path d="M2 3.500h5l-2.500-3z" fill="#666" stroke="none" /></svg><span className="ml-[4px] w-[42px]">Notes</span>
        <svg width="9" height="9"><path d="M0 1h9v8H0z" fill="#777" /></svg><span className="ml-[4px] w-[59px]">Comments</span>
        <svg className="-mt-[2px]" width="240" height="11" viewBox="451 639 240 11" fill="none" stroke="#666">
          <path d="M451 639h30v11h-30z" fill="#cbcbcb" stroke="none" /><path d="M461.500 643.500h10v7h-10zM464 644v6M467 646h4M467 648.500h4M491.500 643.500h4v3h-4zM498.500 643.500h4v3h-4zM491.500 648.500h4M498.500 648.500h4M522.500 643.500h10v7M522.500 643v7M527.500 643v7M524 646h2M529 646h2M524 648.500h2M529 648.500h2M553 643.500h10M554.500 644v4h7v-4" />
          <path d="M578 648.500h5M671 648.500h6M674 645v6" strokeWidth="1.500" /><path d="M587 648.500h80" stroke="#999" /><path d="M609 644h3v6h-3z" fill="#555" stroke="none" />
        </svg>
        <span className="w-[26px]">61%</span><svg width="12" height="9" fill="none" stroke="#666"><path d="M.5 8V.5H11V8M5.500 8V3M3 5l2.500-2L8 5" /></svg>
      </div>
    </div>
  );
}

/* ---------- participants ---------- */

const people = [
  { l: 'H', n: 'Bạn', c: 'bg-[#00897b]' }, { l: 'T', n: 'Thảo Nguyễn Thị Bích', c: 'bg-[#004d40]', talk: true },
  { l: 'T', n: 'Toàn Lê', c: 'bg-[#689f38]' }, { l: 'Q', n: 'Quyn Lê Minh', c: 'bg-[#0288d1]' },
];

function Tiles() {
  return (
    <div className="h-[531px] w-[262px] overflow-hidden bg-[#202124] font-['Roboto',sans-serif]">
      {people.map((p) => (
        <div key={p.n} className="relative flex h-[133px] items-center justify-center">
          {p.talk && <div className="absolute left-[68px] top-[4px] flex size-[126px] items-center justify-center rounded-full bg-[#404144]"><div className="size-[98px] rounded-full border border-[#55565a]" /></div>}
          <div className={p.c + ' relative flex size-[79px] items-center justify-center rounded-full text-[42px] text-white'}>{p.l}</div>
          <div className="absolute left-[8px] top-[99.500px] flex items-center">
            {p.talk
              ? <svg width="26" height="26" fill="#64ffda"><rect x="5" y="10" width="4" height="6" rx="2" /><rect x="11" y="6" width="4" height="14" rx="2" /><rect x="17" y="10" width="4" height="6" rx="2" /></svg>
              : <span className="flex size-[26px] items-center justify-center rounded-full bg-[#d93025] text-white"><MdMicOff size={17} /></span>}
            <span className="-mt-[1px] ml-[8px] whitespace-nowrap text-[14px] font-medium tracking-[-0.050px] text-white">{p.n}</span>
          </div>
        </div>
      ))}
    </div>
  );
}

/* ---------- side panel ---------- */

const chat = [
  ['14:16', 'E làm bằng WordPress cô'], ['14:18', 'Đợi e xíu e đang onl đth'], ['14:19', 'nó load hơi lâu cô'],
  ['14:22', 'E mới thêm 2 cái mấy cô'], ['14:24', 'Nó chỉ có thế thôi cô'],
];

function Panel() {
  return (
    <div className="flex h-[579px] w-[360px] flex-col bg-white font-['Roboto',sans-serif] text-[#3c4043]">
      <div className="flex h-[64px] items-center justify-between pl-[24px] pr-[16px]">
        <span className="font-['Lato',sans-serif] text-[18px] tracking-[0.300px]">Chi tiết về cuộc họp</span><MdClose size={24} className="text-[#5f6368]" />
      </div>
      <div className="flex h-[51px] shrink-0 border-b border-[#e8eaed] text-[#5f6368]">
        <div className="flex w-[120px] items-center justify-center font-['Lato',sans-serif] text-[15px] font-medium"><MdOutlinePeopleAlt size={24} /><span className="ml-[5px]">(10)</span></div>
        <div className="flex w-[120px] flex-col items-center pt-[14px] text-[#00796b]"><MdChatBubble size={24} /><span className="mt-auto h-[3px] w-[20px] rounded-t-[3px] bg-[#00796b]" /></div>
        <div className="flex w-[120px] items-center justify-center"><MdOutlineCategory size={24} /></div>
      </div>
      <div className="flex h-[393px] shrink-0 border-b border-[#e8eaed]">
        <div className="h-[392px] flex-1 overflow-hidden pl-[24px] text-[13px] leading-[20px]">
          <div className="-mt-[5px] w-[300px]">dạ chay dc 1 trang chủ thôi nha cô. mấy còn lại<br />mấy bạn chưa làm</div>
          {chat.map(([time, msg]) => (
            <div key={time} className="mt-[28px] h-[39px]">
              <div className="h-[19px]"><span className="font-medium text-[#202124]">Ngọc Thành</span><span className="ml-[8px] text-[#5f6368]">{time}</span></div>
              <div>{msg}</div>
            </div>
          ))}
        </div>
        <div className="w-[13px] pt-[267px]"><div className="h-[119px] w-[10px] bg-[#c1c1c1]" /></div>
      </div>
      <div className="flex flex-1 items-start pl-[20px] pt-[26px]">
        <div className="h-[22px] w-[267px] border-b border-[#dadce0] text-[13.500px] leading-[20px] tracking-[-0.250px] text-[#80868b]">Gửi tin nhắn cho mọi người</div>
        <MdOutlineSend size={23} className="-mt-[2px] ml-[25px] text-[#dadce0]" />
      </div>
    </div>
  );
}

function Controls() {
  return (
    <div className="flex h-[88px] items-center border-t border-[#e8eaed] bg-white pb-[2px] font-['Lato',sans-serif] text-[#3c4043]">
      <div className="flex w-[583px] items-center pl-[24px] text-[18px] tracking-[0.300px]">Chi tiết về cuộc họp<MdKeyboardArrowUp size={24} className="ml-[8px] text-[#5f6368]" /></div>
      <div className="flex gap-[16px] text-white">
        <div className="flex size-[56px] items-center justify-center rounded-full bg-[#d93025]"><MdOutlineMicOff size={24} /></div>
        <div className="flex size-[56px] items-center justify-center rounded-full border border-[#dadce0] text-[#d93025]"><MdCallEnd size={25} /></div>
        <div className="flex size-[56px] items-center justify-center rounded-full bg-[#d93025]"><MdOutlineVideocamOff size={25} /></div>
      </div>
      <div className="ml-[265px] flex w-[80px] flex-col items-center pb-[4px] text-[14px] leading-[18px] text-[#3c4043]">
        <MdOutlinePanTool size={24} className="text-[#5f6368]" /><span className="mt-[4px]">Giơ tay</span>
      </div>
      <div className="ml-[23px] flex w-[160px] flex-col items-center whitespace-nowrap pb-[2px] text-center text-[14px] leading-[18px] tracking-[-0.300px]">
        <svg width="24" height="24" fill="none" stroke="#5f6368" strokeWidth="2"><path d="M2 3h20v18H2z" /><path d="M12 17v-7M8.500 12.500L12 9l3.500 3.500" /></svg>
        <span className="mt-[3px]">Thảo Nguyễn Thị Bích<br />đang trình bày</span>
      </div>
      <MdMoreVert size={24} className="ml-[13px]" />
    </div>
  );
}

/* ---------- taskbar ---------- */

const Chrome = () => (
  <svg width="16" height="16"><circle cx="8" cy="8" r="7" fill="#fbc116" /><path d="M8 8L1.900 4.500A7 7 0 0 1 14.200 5H8z" fill="#e33b2e" /><path d="M8 8l-1.500 6.800A7 7 0 0 1 1.700 4.700z" fill="#2da94f" /><circle cx="8" cy="8" r="3.400" fill="#fff" /><circle cx="8" cy="8" r="2.600" fill="#3b7ded" /></svg>
);
const SmallText = ({ x, y, s, f, c }: { x: number; y: number; s: number; f: string; c: string }) => <text x={x} y={y} fontSize={s} fill={f} stroke="none" fontWeight="700" letterSpacing="0" fontFamily="Liberation Sans, sans-serif" textAnchor="middle">{c}</text>;
const Word = () => <svg width="16" height="16"><path d="M3 0h12v16H3z" fill="#e8f0fb" /><path d="M11 3h3M11 6h3M11 9h3M5 13h9" stroke="#5f8ed2" /><path d="M0 2h11v10H0z" fill="#2a5db0" /><SmallText x={5.500} y={10} s={9} f="#fff" c="W" /></svg>;
const Zalo = () => <svg width="16" height="16"><rect width="16" height="16" rx="6" fill="#fff" /><path d="M1 12q5 4 13 1l-3 3H5z" fill="#0a68ff" /><SmallText x={8} y={10.500} s={6.500} f="#0a68ff" c="Zalo" /></svg>;

const tasks: { t: string; i: React.ReactNode; w: string }[] = [
  { t: 'Meet ...', w: 'w-[69px] mr-[4px] bg-[#3d4144] pl-[5px]', i: <Chrome /> },
  { t: '[ Chi...', w: 'w-[60px] mr-[9px]', i: <Chrome /> },
  { t: 'Micr...', w: 'w-[61px] mr-[9px]', i: <svg width="16" height="16"><path d="M5 1h10v14H5z" fill="#fff" stroke="#2a9246" /><path d="M1 3h9v10H1z" fill="#218a3c" /><path d="M3 5l5 6M8 5l-5 6" stroke="#fff" strokeWidth="1.600" /></svg> },
  { t: 'Zalo', w: 'w-[61px] mr-[9px]', i: <Zalo /> },
  { t: '[gofa...', w: 'w-[60px] mr-[9px]', i: <svg width="16" height="16"><path d="M0 0h5v16H0z" fill="#c2397c" /><path d="M5 0h6v16H5z" fill="#3c56c4" /><path d="M11 0h5v16h-5z" fill="#3d9b3f" /><path d="M0 6h16v5H0z" fill="#c9423b" /><path d="M6 3h4v10H6z" fill="#e8cf6a" /><path d="M7 7h2v4H7z" fill="#333" /></svg> },
  { t: 'baith...', w: 'w-[60px] mr-[9px]', i: <svg width="16" height="16"><path d="M2 0h7v3h4v13H2z" fill="#f7d774" /><path d="M10 5h4v11H5z" fill="#fbe69f" /></svg> },
  { t: 'stude...', w: 'w-[60px] mr-[9px]', i: <svg width="16" height="16" fill="none"><circle cx="8" cy="8" r="7.500" fill="#3fa873" /><g stroke="#e4f6ec" strokeWidth=".8"><ellipse cx="8" cy="8" rx="5.500" ry="2.200" /><ellipse cx="8" cy="8" rx="5.500" ry="2.200" transform="rotate(60 8 8)" /><ellipse cx="8" cy="8" rx="5.500" ry="2.200" transform="rotate(120 8 8)" /></g></svg> },
  { t: 'local...', w: 'w-[60px] mr-[9px]', i: <span className="w-[16px]" /> },
  { t: 'C:\\xa...', w: 'w-[60px] mr-[9px]', i: <svg width="16" height="16"><path d="M2 2h12v13H2z" fill="#f4f7e8" /><path d="M2 1h12v3H2z" fill="#6d8796" /><path d="M3 7h7v7H3z" fill="#97d04b" /><path d="M8 12l6-9 2 1-6 9z" fill="#f0a42d" /></svg> },
  { t: 'Micr...', w: 'w-[60px] mr-[9px]', i: <svg width="16" height="16"><path d="M4 0h11v15H4z" fill="#f7c6ad" /><path d="M0 2h12v12H0z" fill="#d6502c" /><SmallText x={6} y={12} s={11} f="#fff" c="P" /><circle cx="12" cy="11" r="3" fill="none" stroke="#fff" /></svg> },
  { t: 'định ...', w: 'w-[60px] mr-[9px]', i: <Word /> },
  { t: 'Báo c...', w: 'w-[60px] mr-[9px]', i: <Word /> },
  { t: 'BÁO_...', w: 'w-[60px] mr-[8px]', i: <Word /> },
  { t: 'BaoC...', w: 'w-[60px] mr-[9px]', i: <Word /> },
];

function Taskbar() {
  return (
    <div className="flex h-[30px] items-stretch bg-[#090e15] font-['Open_Sans',sans-serif] text-[11.500px] tracking-[-0.150px] text-white">
      <div className="flex w-[75px] items-center pl-[10px]">
        <svg width="16" height="16" fill="#fff"><path d="M0 2l7-1v6.500H0zM8 1l8-1v7.500H8zM0 8.500h7V15l-7-1zM8 8.500h8V16l-8-1z" /></svg>
        <svg className="ml-[20px]" width="17" height="17" fill="none" stroke="#fff" strokeWidth="1.400"><circle cx="10.500" cy="6" r="5" /><path d="M7 10l-6 6" /></svg>
      </div>
      {tasks.map((t, i) => (
        <div key={i} className={t.w + ' flex shrink-0 items-center overflow-hidden whitespace-nowrap border-b-2 border-[#76b9ed] pt-[2px]'}>
          <span className="flex w-[18px] shrink-0 items-center pl-[1px]">{t.i}</span><span className="ml-[3px]">{t.t}</span>
        </div>
      ))}
      <div className="flex items-center">
        <svg width="212" height="18" viewBox="1046 744 212 18" fill="none" stroke="#fff">
          <rect x="1048" y="745" width="15" height="16" rx="6" fill="#fff" stroke="none" /><SmallText x={1055} y={755.500} s={6} f="#0a68ff" c="Zalo" /><circle cx="1060" cy="748" r="3.500" fill="#e5352d" stroke="none" />
          <path d="M1072 752h12v8h-12z" fill="#c8d3e2" stroke="none" /><path d="M1073 754h9v2h-9z" fill="#1e4fa0" stroke="none" /><path d="M1077 754l6-8M1077 750v4h4" stroke="#e33" strokeWidth="2.200" />
          <rect x="1096" y="745" width="15" height="16" rx="3" fill="#f7792a" stroke="none" /><path d="M1102 749h-3v2.500q0 1.500 1.500 1.500h-1.500v4h3M1105 749h3v2.500q0 1.500-1.500 1.500h1.500v4h-3M1100.500 753h6" strokeWidth="1.500" />
          <path d="M1127 745l6 2v6q-1 5-6 7-5-2-6-7v-6z" fill="#fff" /><path d="M1127 746v13M1121 752h12" stroke="#090e15" /><rect x="1127" y="753" width="8" height="8" rx="2" fill="#d93b31" stroke="none" /><path d="M1129 755l4 4M1133 755l-4 4" />
          <path d="M1148.500 749.500h9v8h-9v-3M1158.500 752v3M1151 751.500h5v4h-5" /><path d="M1143.500 747v3h4v-3M1145.500 750v5h3M1144.500 745v2M1146.500 745v2" />
          <path d="M1168 751h3l4-4v12l-4-4h-3zM1177 750q2 3 0 6M1179.500 748q3.500 5 0 10M1182 746q4.500 7 0 14" />
          <rect x="1191" y="745" width="15" height="16" rx="3" fill="#3da3e0" stroke="none" /><path d="M1194 748h9v7h-9zM1196 758h5" stroke="#dff" /><path d="M1200 750l2 6" stroke="#f5c842" strokeWidth="2" />
          <path d="M1218 759q1-9 11-10M1221 759q1-6 8-7M1224 759q1-3 5-4" strokeWidth="1.200" /><circle cx="1228" cy="758.500" r="1" fill="#fff" />
          <path d="M1240 745h15v16h-15z" fill="#f6f6f6" stroke="none" /><SmallText x={1247.500} y={758} s={14} f="#d32f3b" c="V" />
        </svg>
        <span className="ml-[7px] w-[60px] tracking-[-0.400px]">14:35:38</span>
        <svg width="16" height="16"><path d="M0 0h16v12H9v4l-4-4H0z" fill="#fff" /><path d="M3 3.500h10M3 6h10M3 8.500h10" stroke="#090e15" /></svg>
        <span className="ml-[21px] h-[30px] w-px bg-[#555]" />
      </div>
    </div>
  );
}

export default function App() {
  return (
    <div className="h-[768px] w-[1366px] overflow-hidden bg-white">
      <Browser />
      <div className="flex h-[579px]">
        <div className="w-[1006px] bg-[#111]">
          <div className="flex h-[48px] items-center pl-[24px] font-['Roboto',sans-serif] font-medium text-white">
            <span className="flex size-[36px] items-center justify-center rounded-full bg-[#004d40] text-[20px] font-normal">T</span>
            <span className="ml-[16px] text-[18px] tracking-[-0.090px]">Thảo Nguyễn Thị Bích đang trình bày</span>
          </div>
          <div className="flex h-[531px] gap-[8px] pl-[7px]"><PowerPoint /><Tiles /></div>
        </div>
        <Panel />
      </div>
      <Controls />
      <Taskbar />
    </div>
  );
}
